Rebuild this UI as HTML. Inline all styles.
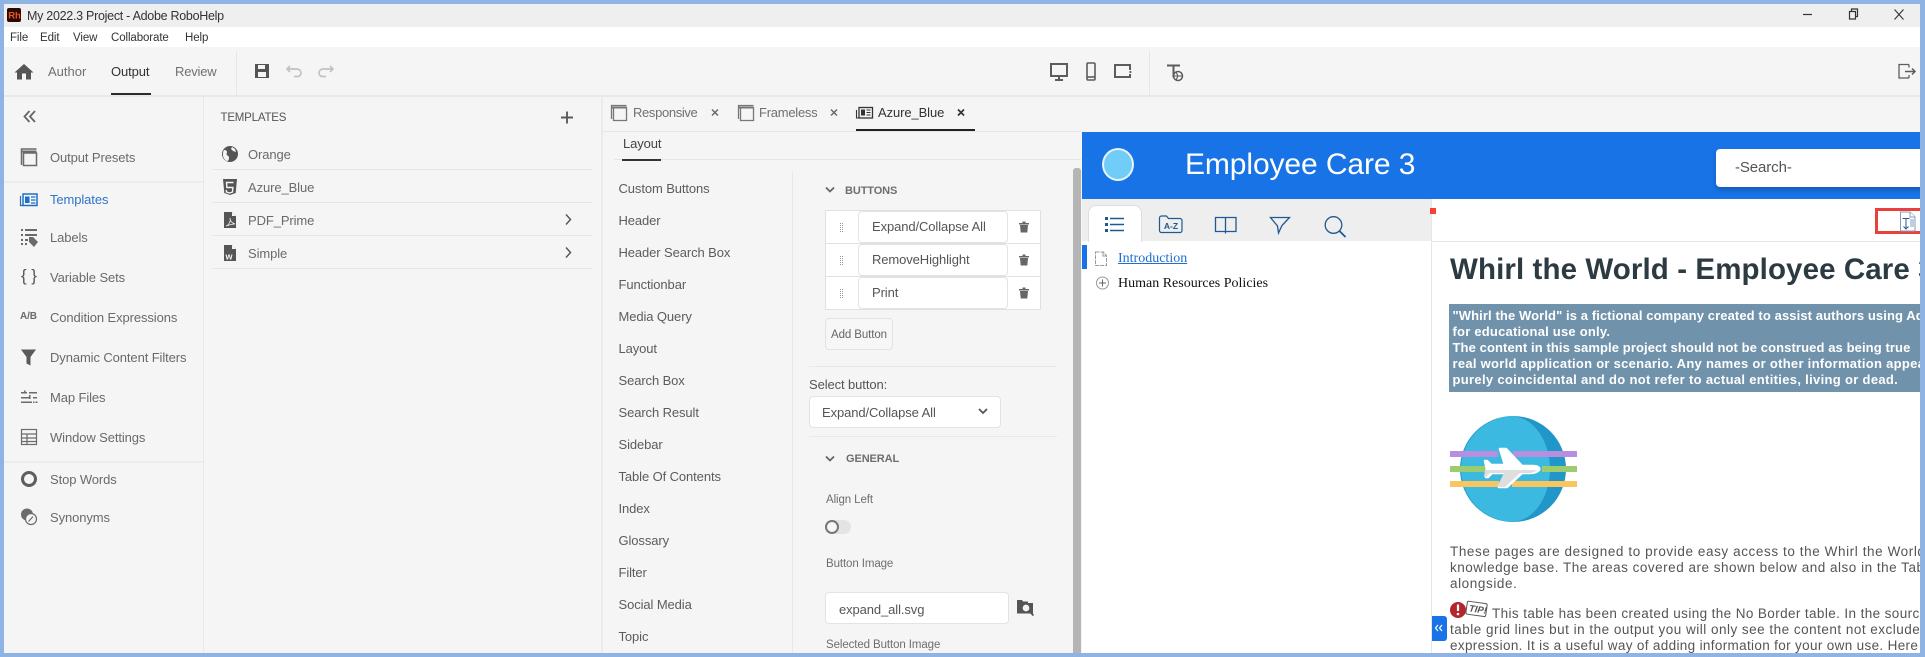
<!DOCTYPE html>
<html><head><meta charset="utf-8"><title>My 2022.3 Project - Adobe RoboHelp</title>
<style>
html,body{margin:0;padding:0;width:1925px;height:657px;overflow:hidden;background:#f5f5f5}
body{position:relative;font-family:"Liberation Sans",sans-serif;filter:blur(.3px)}
.b{position:absolute}
.t{position:absolute;white-space:nowrap;line-height:20px;height:20px;font-size:13px;color:#666;letter-spacing:-.1px;margin-top:1px}
.n{color:#6a6a6a;font-size:13px}
.l{color:#5c5c5c;left:618.500px}
.h{font-weight:bold;font-size:11px;color:#6e6e6e}
.s{font-size:11.500px;color:#6e6e6e;left:826px}
.in{position:absolute;background:#fff;border:1px solid #e3e3e3;border-radius:4px;box-sizing:border-box}
.w{font-weight:bold;color:#fff;font-size:13px;left:3.500px;line-height:16px;height:16px;margin-top:0}
.p{color:#555;font-size:13.500px;letter-spacing:.59px;left:1px;line-height:16px;height:16px;margin-top:0}
svg{position:absolute;left:0;top:0}
</style></head><body>
<!-- backgrounds -->
<div class="b" style="left:0;top:0;width:1925px;height:27px;background:#efefef"></div>
<div class="b" style="left:0;top:27px;width:1925px;height:20px;background:#fff"></div>
<div class="b" style="left:0;top:95px;width:1925px;height:2px;background:#e8e8e8"></div>
<div class="b" style="left:203px;top:97px;width:1px;height:560px;background:#e9e9e9"></div>
<div class="b" style="left:601px;top:97px;width:2px;height:560px;background:#ebebeb"></div>
<div class="b" style="left:236px;top:51px;width:1px;height:44px;background:#e6e6e6"></div>
<div class="b" style="left:1149px;top:51px;width:1px;height:44px;background:#e6e6e6"></div>
<div class="b" style="left:111px;top:93px;width:40px;height:2px;background:#2c2c2c"></div>
<div class="b" style="left:4px;top:181px;width:199px;height:2px;background:#ebebeb"></div>
<div class="b" style="left:4px;top:461px;width:199px;height:2px;background:#ebebeb"></div>
<div class="b" style="left:212px;top:169px;width:380px;height:1px;background:#e6e6e6"></div>
<div class="b" style="left:212px;top:202px;width:380px;height:1px;background:#e6e6e6"></div>
<div class="b" style="left:212px;top:235px;width:380px;height:1px;background:#e6e6e6"></div>
<div class="b" style="left:212px;top:268px;width:380px;height:1px;background:#e6e6e6"></div>
<div class="b" style="left:603px;top:131px;width:478px;height:1px;background:#e6e6e6"></div>
<div class="b" style="left:856px;top:129px;width:119px;height:2px;background:#222"></div>
<div class="b" style="left:614px;top:159px;width:467px;height:1px;background:#e6e6e6"></div>
<div class="b" style="left:622px;top:159px;width:39px;height:2px;background:#333"></div>
<div class="b" style="left:792px;top:172px;width:1px;height:485px;background:#e8e8e8"></div>
<div class="b" style="left:1073px;top:168px;width:8px;height:489px;background:#b5b5b5;border-radius:3px 3px 0 0"></div>
<div class="b" style="left:809px;top:366px;width:248px;height:1px;background:#e8e8e8"></div>
<div class="b" style="left:809px;top:436px;width:248px;height:1px;background:#e8e8e8"></div>

<!-- buttons table -->
<div class="b" style="left:825px;top:210px;width:216px;height:100px;background:#fff;border:1px solid #e0e0e0;box-sizing:border-box"></div>
<div class="b" style="left:825px;top:243px;width:216px;height:1px;background:#e0e0e0"></div>
<div class="b" style="left:825px;top:276px;width:216px;height:1px;background:#e0e0e0"></div>
<div class="in" style="left:858px;top:211px;width:150px;height:32px"></div>
<div class="in" style="left:858px;top:244px;width:150px;height:32px"></div>
<div class="in" style="left:858px;top:277px;width:150px;height:32px"></div>
<div class="in" style="left:825px;top:318px;width:68px;height:32px;background:#f7f7f7"></div>
<div class="in" style="left:809px;top:396px;width:192px;height:32px"></div>
<div class="in" style="left:825px;top:592px;width:184px;height:32px"></div>
<div class="b" style="left:825px;top:520px;width:26px;height:14px;background:#e4e4e4;border-radius:7px"></div>
<div class="b" style="left:825px;top:520px;width:14px;height:14px;background:#f7f7f7;border:2px solid #777;border-radius:50%;box-sizing:border-box"></div>

<!-- preview -->
<div class="b" style="left:1082px;top:132px;width:838px;height:67px;background:#1873e6"></div>
<div class="b" style="left:1082px;top:199px;width:838px;height:454px;background:#fff"></div>
<div class="b" style="left:1082px;top:199px;width:349px;height:42px;background:#eeeeee"></div>
<div class="b" style="left:1431px;top:199px;width:1px;height:454px;background:#e6e6e6"></div>
<div class="b" style="left:1432px;top:241px;width:488px;height:1px;background:#e4e4e4"></div>
<div class="b" style="left:1088px;top:205px;width:54px;height:37px;background:#fff;border:1px solid #dedede;border-bottom:0;border-radius:8px 8px 0 0;box-sizing:border-box"></div>
<div class="b" style="left:1082px;top:245px;width:5px;height:24px;background:#1873e6"></div>
<div class="b" style="left:1430px;top:208px;width:6px;height:6px;background:#f44336"></div>
<div class="b" style="left:1102px;top:148px;width:32px;height:33px;border-radius:50%;background:#6fcdf8;border:2.500px solid #e8f4fc;box-sizing:border-box"></div>
<div class="b" style="left:1716px;top:149px;width:210px;height:38px;background:#fff;border-radius:4px;box-shadow:0 3px 5px rgba(0,0,0,.2)"></div>
<div class="b" style="left:1875px;top:208px;width:50px;height:26px;border:3px solid #e8403a;box-sizing:border-box"></div>

<!-- content -->
<div class="b" style="left:1449px;top:242px;width:471px;height:411px;overflow:hidden">
  <div class="t" style="left:1px;top:11px;margin-top:0;height:34px;line-height:34px;font-size:29.500px;font-weight:bold;color:#2c3a42;letter-spacing:.1px">Whirl the World - Employee Care 3</div>
  <div class="b" style="left:0;top:62px;width:471px;height:88px;background:#7092ab"></div>
  <div class="t w" style="top:66px;letter-spacing:.1px">"Whirl the World" is a fictional company created to assist authors using Adobe RoboHelp</div>
  <div class="t w" style="top:82px;letter-spacing:.22px">for educational use only.</div>
  <div class="t w" style="top:98px;letter-spacing:.1px">The content in this sample project should not be construed as being true</div>
  <div class="t w" style="top:114px;letter-spacing:.28px">real world application or scenario. Any names or other information appearing here are</div>
  <div class="t w" style="top:130px;letter-spacing:.32px">purely coincidental and do not refer to actual entities, living or dead.</div>
  <div class="t p" style="top:302px">These pages are designed to provide easy access to the Whirl the World knowledge</div>
  <div class="t p" style="top:318px;letter-spacing:.51px">knowledge base. The areas covered are shown below and also in the Table of Contents</div>
  <div class="t p" style="top:334px">alongside.</div>
  <div class="t p" style="top:364px;left:43px;letter-spacing:.39px">This table has been created using the No Border table. In the source view</div>
  <div class="t p" style="top:380px;letter-spacing:.49px">table grid lines but in the output you will only see the content not excluded by</div>
  <div class="t p" style="top:396px;letter-spacing:.34px">expression. It is a useful way of adding information for your own use. Here is more</div>
</div>
<div class="b" style="left:1432px;top:616px;width:15px;height:25px;background:#1873e6;border-radius:0 3px 3px 0"></div>

<!-- icons -->
<svg width="1925" height="657" viewBox="0 0 1925 657">
<!-- app logo -->
<rect x="7" y="8" width="14" height="14" rx="2" fill="#2a0a08"/>
<text x="8.200" y="18.500" font-family="Liberation Sans" font-size="9.500" font-weight="bold" fill="#f2551c">Rh</text>
<!-- window controls -->
<path d="M1803 14.500h9" stroke="#333" stroke-width="1.200"/>
<path d="M1849.500 11.500h6v7.500h-6zM1851.500 11.500v-2.500h6v7.500h-2" fill="none" stroke="#333" stroke-width="1.200"/>
<path d="M1894.500 9.500l9 10m0-10l-9 10" stroke="#333" stroke-width="1.100"/>
<!-- home -->
<path d="M24 64l9.500 8.500h-2.500v7h-5v-6h-4v6h-5v-7h-2.500z" fill="#555"/>
<!-- save -->
<path d="M255 64h14v14h-14zM258 65v4h7v-4zM258 72v5h8v-5z" fill="#555" fill-rule="evenodd"/>
<!-- undo / redo -->
<path d="M290 66l-3 3 3 3M287 69h10a4 4 0 0 1 4 4v0a3.500 3.500 0 0 1-3.500 3.500H294" fill="none" stroke="#c2c2c2" stroke-width="1.700"/>
<path d="M330 66l3 3-3 3M333 69h-10a4 4 0 0 0-4 4v0a3.500 3.500 0 0 0 3.500 3.500H326" fill="none" stroke="#c2c2c2" stroke-width="1.700"/>
<!-- monitor phone tablet -->
<g fill="none" stroke="#5c5c5c">
<rect x="1051" y="64" width="16" height="12" stroke-width="2"/>
<path d="M1059 77v2.500M1055 80h8" stroke-width="2"/>
<rect x="1087" y="63" width="8" height="17" rx="1" stroke-width="1.600"/>
<path d="M1087 77h8" stroke-width="1.600"/>
<path d="M1130 70v-5h-15v12h15v-3" stroke-width="2"/>
<!-- T translate -->
<path d="M1167 65.500h13M1173.500 65.500v12" stroke-width="2"/>
<circle cx="1178" cy="76" r="4.500" stroke-width="1.500"/>
<path d="M1173.500 76h9M1176 72l2 4-2 4" stroke-width="1.100"/>
<!-- exit -->
<path d="M1909 64.500h-10v13.500h10M1909 64.500v3M1909 78v-3" stroke-width="1.300"/>
<path d="M1905 71.500h10M1912 68.500l3 3-3 3" stroke-width="1.500"/>
</g>
<rect x="1129.500" y="71" width="1.800" height="2" fill="#5c5c5c"/>
<!-- collapse -->
<path d="M29.500 111l-5 5.500 5 5.500M35 111l-5 5.500 5 5.500" fill="none" stroke="#666" stroke-width="1.800"/>
<!-- nav icons -->
<g fill="none" stroke="#6b6b6b" stroke-width="1.500">
<path d="M21.500 165v-16h15"/>
<rect x="23.500" y="153" width="13" height="12.500"/>
<path d="M22 151.500h14.500" stroke-width="2"/>
</g>
<rect x="23" y="194" width="14" height="11.500" fill="none" stroke="#1f6fc7" stroke-width="1.500"/>
<path d="M20.500 196v9.500h2.500" fill="none" stroke="#1f6fc7" stroke-width="1.200"/>
<rect x="25" y="196.500" width="4.500" height="6.500" fill="#1f6fc7"/>
<path d="M31 197h4.500M31 200h4.500M31 203h4.500" stroke="#1f6fc7" stroke-width="1.300"/>
<g fill="#6b6b6b">
<path d="M21 229h2v2h-2zM25 229h12v2H25zM21 234h2v2h-2zM25 234h12v2H25zM21 239h2v2h-2zM25 239h3v2h-3zM21 243h2v2h-2zM25 243h2v2h-2z"/>
<path d="M29 237h4l5 5-4 5-5-5z"/>
</g>
<path d="M21 349.500h15l-5.500 7.500v8.500l-4-2v-6.500z" fill="#5a5a5a"/>
<path d="M21 392h6v1.500h-6zM24 390.500h1.500v3H24zM29 392h8v1.500h-8zM21 397h9v1.500h-9zM29 395h1.500v4H29zM33 397h4v1.500h-4zM21 401.500h11v1.500H21zM33 401.500h1.500v1.500H33zM35.500 401.500h2v1.500h-2z" fill="#6b6b6b"/>
<g fill="none" stroke="#6b6b6b" stroke-width="1.200">
<rect x="21.500" y="429.500" width="15" height="15"/>
<path d="M21.500 434h15M21.500 438h15M21.500 441.500h15M27 434v10.500"/>
</g>
<circle cx="29" cy="479" r="6.500" fill="#f5f5f5" stroke="#5e5e5e" stroke-width="3"/>
<rect x="25.500" y="475.500" width="7" height="7" rx="1" fill="#f5f5f5"/>
<circle cx="27" cy="514.500" r="6" fill="#6b6b6b"/>
<circle cx="31" cy="519" r="5.500" fill="#f5f5f5" stroke="#6b6b6b" stroke-width="1.200"/>
<path d="M28.500 521.500l4.500-5" stroke="#6b6b6b" stroke-width="1.200"/>
<!-- plus -->
<path d="M561 117.500h12M567 111.500v12" stroke="#5a5a5a" stroke-width="1.900"/>
<!-- template icons -->
<circle cx="230" cy="154" r="8" fill="#555"/>
<path d="M224 150c2 0 3 1 3 2s-1 2 0 3 2 1 2 3-1 3-2 3c-2-1-4-3-4-6 0-2 0-4 1-5zM232 147l3 2 1 3-3-1-2-2z" fill="#f5f5f5"/>
<path d="M223 179h14l-1.300 14-5.700 2-5.700-2z" fill="#555"/>
<path d="M233.500 182.500h-7l.4 5h6l-.4 4.500-3 1-3-1-.2-2" fill="none" stroke="#f5f5f5" stroke-width="1.400"/>
<path d="M224 212h8l4 4v12h-12z" fill="#555"/>
<path d="M232 212v4h4" fill="#f5f5f5"/>
<path d="M226 226c3-1 5-5 4-8 0 3 2 5 5 6-3 0-6 1-9 2z" fill="none" stroke="#f5f5f5" stroke-width=".8"/>
<path d="M224 245h8l4 4v12h-12z" fill="#555"/>
<path d="M232 245v4h4" fill="#f5f5f5"/>
<text x="225.500" y="259.500" font-family="Liberation Sans" font-size="9" font-weight="bold" fill="#f5f5f5">w</text>
<path d="M566 214.500l4.500 5-4.500 5M566 247.500l4.500 5-4.500 5" fill="none" stroke="#5a5a5a" stroke-width="1.500"/>
<!-- tab icons -->
<g fill="none" stroke="#777" stroke-width="1.300">
<path d="M611.500 119v-13.500h15M613.500 120.500v-13h13v13z"/><path d="M612 107.500h14.500" stroke-width="2"/>
<path d="M738.500 119v-13.500h15M740.500 120.500v-13h13v13z"/><path d="M739 107.500h14.500" stroke-width="2"/>
</g>
<path d="M712 109.500l6 6m0-6l-6 6M831 109.500l6 6m0-6l-6 6" stroke="#6a6a6a" stroke-width="1.500"/>
<path d="M958 109.500l6 6m0-6l-6 6" stroke="#333" stroke-width="1.700"/>
<rect x="859" y="107.500" width="13.500" height="10.500" fill="none" stroke="#333" stroke-width="1.300"/>
<path d="M856.500 110v8h2.500" fill="none" stroke="#333" stroke-width="1.100"/>
<rect x="861" y="109.500" width="4" height="6" fill="#333"/>
<path d="M866.500 110h4M866.500 112.500h4M866.500 115h4" stroke="#333" stroke-width="1.100"/>
<!-- chevrons -->
<g fill="none" stroke="#666" stroke-width="1.800">
<path d="M826 187.500l4 4 4-4M826 456.500l4 4 4-4"/>
<path d="M979 409l4 4 4-4" stroke="#555"/>
</g>
<!-- grips -->
<g fill="#999">
<path d="M840 223h1v1h-1zM842 223h1v1h-1zM840 225h1v1h-1zM842 225h1v1h-1zM840 227h1v1h-1zM842 227h1v1h-1zM840 229h1v1h-1zM842 229h1v1h-1zM840 231h1v1h-1zM842 231h1v1h-1z"/>
<path d="M840 256h1v1h-1zM842 256h1v1h-1zM840 258h1v1h-1zM842 258h1v1h-1zM840 260h1v1h-1zM842 260h1v1h-1zM840 262h1v1h-1zM842 262h1v1h-1zM840 264h1v1h-1zM842 264h1v1h-1z"/>
<path d="M840 289h1v1h-1zM842 289h1v1h-1zM840 291h1v1h-1zM842 291h1v1h-1zM840 293h1v1h-1zM842 293h1v1h-1zM840 295h1v1h-1zM842 295h1v1h-1zM840 297h1v1h-1zM842 297h1v1h-1z"/>
</g>
<!-- trash -->
<g fill="#666">
<path d="M1019 223h10v1.500h-10zM1022.500 221.500h3v1.500h-3zM1020 225h8l-.7 7.500h-6.600z"/>
<path d="M1019 256h10v1.500h-10zM1022.500 254.500h3v1.500h-3zM1020 258h8l-.7 7.500h-6.600z"/>
<path d="M1019 289h10v1.500h-10zM1022.500 287.500h3v1.500h-3zM1020 291h8l-.7 7.500h-6.600z"/>
</g>
<!-- folder search -->
<rect x="1017" y="603" width="16" height="10.500" fill="#555"/>
<path d="M1017 600h5l1 1.500h5v2h-11z" fill="#555"/>
<circle cx="1026" cy="608" r="4" fill="#f5f5f5" stroke="#555" stroke-width="1.300"/>
<path d="M1029 611l4.500 4.500" stroke="#555" stroke-width="1.800"/>
<!-- side tabs -->
<g fill="none" stroke="#1c5a92" stroke-width="1.400">
<path d="M1110 218.500h14M1110 224.500h14M1110 230.500h14"/>
<path d="M1159.500 218a2 2 0 0 1 2-2h5l2 2.500h11.500a2 2 0 0 1 2 2v10a2 2 0 0 1-2 2h-18.500a2 2 0 0 1-2-2z" stroke-width="1.200"/>
<path d="M1215.500 217.500h10v14h-10zM1225.500 217.500h10.500v14h-10.500zM1225.500 231.500v2" stroke-width="1.300"/>
<path d="M1270.500 217.500h19l-7.500 8-3.500 7.500-1-7z" stroke-width="1.300"/>
<circle cx="1333.500" cy="225" r="8.300" stroke-width="1.300"/>
<path d="M1339.500 231l6 6" stroke-width="1.800"/>
</g>
<text x="1171" y="229" text-anchor="middle" font-family="Liberation Sans" font-size="8.500" font-weight="bold" fill="#1c5a92">A-Z</text>
<path d="M1105 217h3v3h-3zM1105 223h3v3h-3zM1105 229h3v3h-3z" fill="#1c5a92"/>
<!-- tree icons -->
<path d="M1095.500 252h8l3 3.500v10h-11z" fill="none" stroke="#9a9a9a" stroke-dasharray="4 1"/>
<path d="M1103 252v4h3.500" fill="none" stroke="#9a9a9a"/>
<circle cx="1102.500" cy="283" r="6" fill="none" stroke="#999"/>
<path d="M1099 283h7M1102.500 279.500v7" stroke="#666"/>
<!-- expand icon -->
<path d="M1900.500 212h9.500l5 5v14h-14.500z" fill="#fff" stroke="#7f9cc0"/>
<path d="M1910 212v5h5" fill="#fff" stroke="#7f9cc0"/>
<path d="M1902.500 218.500h7M1906 218.500v10M1903.500 226.500l2.500 2.500 2.500-2.500" fill="none" stroke="#2c5a8a" stroke-width="1"/>
<path d="M1910 220h4M1910 222h4M1910 224h4M1910 226h4" stroke="#7f9cc0"/>
<!-- logo -->
<circle cx="1513" cy="469" r="53" fill="#2196c8"/>
<path d="M1513 416a53 53 0 0 0-52 53 53 53 0 0 0 52 53c25-3 37-30 37-53s-12-50-37-53z" fill="#3cb9e0"/>
<path d="M1450 451h48v6h-48zM1513 451h64v6h-64z" fill="#b78ee0"/>
<path d="M1450 466h37v6h-37zM1542 466h35v6h-35z" fill="#9ccc6e"/>
<path d="M1450 481h49v6h-49zM1512 481h65v6h-65z" fill="#f9c55f"/>
<path d="M1500 449h6l16 17h11c6 0 7 3 6 4-2 2-5 3-9 3h-8l-15 14h-8l7-14h-14l-4 4-2 0 1-7-2-9 2 0 4 4h14z" fill="#fff" stroke="#fff" stroke-width="2.500" stroke-linejoin="round"/>
<path d="M1494 470h43c-2 2-5 3-9 3h-8l-15 14h-8l7-14h-14l-4 4-2 0 1-7z" fill="#dedede"/>
<!-- tip -->
<circle cx="1458" cy="610" r="8" fill="#b3262b"/>
<path d="M1458 604.500v6.500" stroke="#fff" stroke-width="2.200"/>
<circle cx="1458" cy="614" r="1.300" fill="#fff"/>
<g transform="rotate(8 1477 609)"><rect x="1466.500" y="602.500" width="20" height="13" rx="1.500" fill="#fff" stroke="#555"/>
<text x="1469" y="612.500" font-family="Liberation Sans" font-size="9.500" font-style="italic" font-weight="bold" fill="#555">TIP!</text></g>
<!-- collapse sidebar -->
<path d="M1438 625l-2.500 3 2.500 3M1442 625l-2.500 3 2.500 3" fill="none" stroke="#fff" stroke-width="1.200"/>
</svg>

<!-- title and menus -->
<div class="t" style="left:27px;top:6px;margin-top:0;font-size:12.500px;color:#333;letter-spacing:-.28px">My 2022.3 Project - Adobe RoboHelp</div>
<div class="t" style="left:10px;top:27px;font-size:11.500px;color:#333">File</div>
<div class="t" style="left:40px;top:27px;font-size:11.500px;color:#333">Edit</div>
<div class="t" style="left:73px;top:27px;font-size:11.500px;color:#333">View</div>
<div class="t" style="left:111px;top:27px;font-size:11.500px;color:#333">Collaborate</div>
<div class="t" style="left:185px;top:27px;font-size:11.500px;color:#333">Help</div>
<div class="t" style="left:48px;top:61px;font-size:13px;color:#707070;letter-spacing:0">Author</div>
<div class="t" style="left:111px;top:61px;font-size:13px;color:#333">Output</div>
<div class="t" style="left:175px;top:61px;font-size:13px;color:#707070;letter-spacing:-.2px">Review</div>
<!-- nav -->
<div class="t n" style="left:50px;top:147px">Output Presets</div>
<div class="t" style="left:50px;top:189px;font-size:13px;color:#2f74c8">Templates</div>
<div class="t n" style="left:50px;top:227px">Labels</div>
<div class="t n" style="left:21px;top:265px;font-size:17px;color:#555">{ }</div>
<div class="t n" style="left:50px;top:267px">Variable Sets</div>
<div class="t n" style="left:20px;top:306px;font-size:10px;font-weight:bold">A/B</div>
<div class="t n" style="left:50px;top:307px">Condition Expressions</div>
<div class="t n" style="left:50px;top:347px">Dynamic Content Filters</div>
<div class="t n" style="left:50px;top:387px">Map Files</div>
<div class="t n" style="left:50px;top:427px">Window Settings</div>
<div class="t n" style="left:50px;top:469px">Stop Words</div>
<div class="t n" style="left:50px;top:507px">Synonyms</div>
<!-- templates -->
<div class="t" style="left:220.500px;top:107px;font-size:11.500px;color:#555;letter-spacing:-.2px">TEMPLATES</div>
<div class="t n" style="left:248px;top:144px">Orange</div>
<div class="t n" style="left:248px;top:177px">Azure_Blue</div>
<div class="t n" style="left:248px;top:210px">PDF_Prime</div>
<div class="t n" style="left:248px;top:243px">Simple</div>
<!-- tabs -->
<div class="t" style="left:633px;top:102px;color:#707070;letter-spacing:-.35px">Responsive</div>
<div class="t" style="left:759px;top:102px;color:#707070;letter-spacing:-.25px">Frameless</div>
<div class="t" style="left:878px;top:102px;color:#333">Azure_Blue</div>
<div class="t" style="left:623px;top:133px;color:#444">Layout</div>
<!-- list -->
<div class="t l" style="top:178px">Custom Buttons</div>
<div class="t l" style="top:210px">Header</div>
<div class="t l" style="top:242px">Header Search Box</div>
<div class="t l" style="top:274px">Functionbar</div>
<div class="t l" style="top:306px">Media Query</div>
<div class="t l" style="top:338px">Layout</div>
<div class="t l" style="top:370px">Search Box</div>
<div class="t l" style="top:402px">Search Result</div>
<div class="t l" style="top:434px">Sidebar</div>
<div class="t l" style="top:466px">Table Of Contents</div>
<div class="t l" style="top:498px">Index</div>
<div class="t l" style="top:530px">Glossary</div>
<div class="t l" style="top:562px">Filter</div>
<div class="t l" style="top:594px">Social Media</div>
<div class="t l" style="top:626px">Topic</div>
<!-- form -->
<div class="t h" style="left:845px;top:180px">BUTTONS</div>
<div class="t" style="left:872px;top:216px;color:#555">Expand/Collapse All</div>
<div class="t" style="left:872px;top:249px;color:#555">RemoveHighlight</div>
<div class="t" style="left:872px;top:282px;color:#555">Print</div>
<div class="t" style="left:831px;top:324px;font-size:11.500px;color:#666">Add Button</div>
<div class="t" style="left:809px;top:374px;color:#555">Select button:</div>
<div class="t" style="left:822px;top:402px;color:#555">Expand/Collapse All</div>
<div class="t h" style="left:846px;top:448px">GENERAL</div>
<div class="t s" style="top:489px">Align Left</div>
<div class="t s" style="top:553px">Button Image</div>
<div class="t" style="left:839px;top:599px;color:#555">expand_all.svg</div>
<div class="t s" style="top:634px">Selected Button Image</div>
<!-- preview text -->
<div class="t" style="left:1185px;top:144px;height:40px;line-height:40px;font-size:30px;color:#fff;letter-spacing:-.1px">Employee Care 3</div>
<div class="t" style="left:1735px;top:157px;font-size:15px;color:#555">-Search-</div>
<div class="t" style="left:1118px;top:248px;font-family:'Liberation Serif',serif;font-size:14px;color:#1f6fd0;text-decoration:underline;letter-spacing:0">Introduction</div>
<div class="t" style="left:1118px;top:273px;font-family:'Liberation Serif',serif;font-size:14px;color:#111;letter-spacing:0">Human Resources Policies</div>

<!-- window border -->
<div class="b" style="left:0;top:0;width:1925px;height:4px;background:#8fb4e3"></div>
<div class="b" style="left:0;top:653px;width:1925px;height:4px;background:#8fb4e3"></div>
<div class="b" style="left:0;top:0;width:4px;height:657px;background:#8fb4e3"></div>
<div class="b" style="left:1920px;top:0;width:5px;height:657px;background:#8fb4e3"></div>
</body></html>
